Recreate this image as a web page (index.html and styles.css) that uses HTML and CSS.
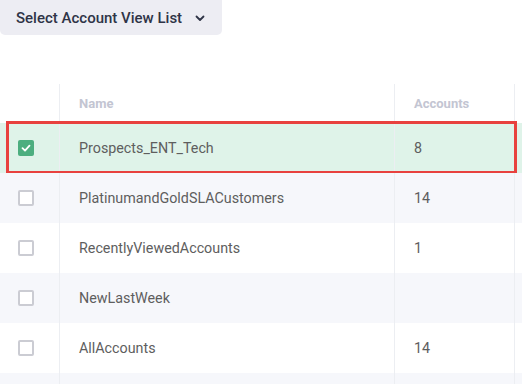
FILE: index.html
```html
<!DOCTYPE html>
<html lang="en">
<head>
  <meta charset="UTF-8">
  <title>Account Views</title>
  <link rel="stylesheet" href="styles.css">
</head>
<body>
  <div class="toolbar">
    <button class="view-select">
      <span>Select Account View List</span>
      <svg width="12" height="12" viewBox="0 0 12 12"><path d="M2.5 4.5 6 8l3.5-3.5" fill="none" stroke="#2f3447" stroke-width="1.8" stroke-linecap="round" stroke-linejoin="round"/></svg>
    </button>
  </div>

  <div class="views-table">
    <div class="row head">
      <div class="cell check"></div>
      <div class="cell name">Name</div>
      <div class="cell count">Accounts</div>
      <div class="cell pad"></div>
    </div>
    <div class="row selected">
      <div class="cell check"><span class="box checked"><svg width="12" height="12" viewBox="0 0 12 12"><path d="M2.5 6.2 5 8.6l4.5-5" fill="none" stroke="#fff" stroke-width="1.8" stroke-linecap="round" stroke-linejoin="round"/></svg></span></div>
      <div class="cell name">Prospects_ENT_Tech</div>
      <div class="cell count">8</div>
      <div class="cell pad"></div>
      <div class="highlight"></div>
    </div>
    <div class="row alt">
      <div class="cell check"><span class="box"></span></div>
      <div class="cell name">PlatinumandGoldSLACustomers</div>
      <div class="cell count">14</div>
      <div class="cell pad"></div>
    </div>
    <div class="row">
      <div class="cell check"><span class="box"></span></div>
      <div class="cell name">RecentlyViewedAccounts</div>
      <div class="cell count">1</div>
      <div class="cell pad"></div>
    </div>
    <div class="row alt">
      <div class="cell check"><span class="box"></span></div>
      <div class="cell name">NewLastWeek</div>
      <div class="cell count"></div>
      <div class="cell pad"></div>
    </div>
    <div class="row">
      <div class="cell check"><span class="box"></span></div>
      <div class="cell name">AllAccounts</div>
      <div class="cell count">14</div>
      <div class="cell pad"></div>
    </div>
    <div class="row alt last">
      <div class="cell check"></div>
      <div class="cell name"></div>
      <div class="cell count"></div>
      <div class="cell pad"></div>
    </div>
  </div>
</body>
</html>
```

FILE: styles.css
```css
* {
  margin: 0;
  padding: 0;
  box-sizing: border-box;
}

body {
  font-family: Roboto, 'Liberation Sans', sans-serif;
  background: #ffffff;
  color: #5e5e5e;
  width: 522px;
  height: 384px;
  overflow: hidden;
}

/* Top dropdown */
.toolbar {
  height: 84px;
}

.view-select {
  display: inline-flex;
  align-items: center;
  gap: 12px;
  height: 35px;
  padding: 0 16px;
  border: none;
  border-radius: 0 0 5px 5px;
  background: #ededf3;
  color: #2f3447;
  font-family: Roboto, sans-serif;
  font-size: 15px;
  font-weight: 500;
  white-space: nowrap;
  cursor: pointer;
}

/* Table */
.views-table {
  display: flex;
  flex-direction: column;
}

.row {
  position: relative;
  display: grid;
  grid-template-columns: 60px 335px 120px 7px;
  height: 50px;
  font-size: 14.3px;
}

.row.head {
  height: 39px;
  font-size: 13px;
  font-weight: 700;
  color: #c3c5d2;
}

.row.last {
  height: 11px;
}

.row.alt {
  background: #f6f7fb;
}

.row.selected {
  background: #dff3e9;
}

.cell {
  display: flex;
  align-items: center;
  border-right: 1px solid #eceef2;
}

.cell.pad {
  border-right: none;
}

.cell.check {
  padding-left: 18px;
}

.cell.name {
  padding-left: 19px;
}

.cell.count {
  padding-left: 19px;
}

.box {
  display: flex;
  align-items: center;
  justify-content: center;
  width: 16px;
  height: 16px;
  border: 2px solid #cbccd3;
  border-radius: 2px;
  background: #ffffff;
}

.box.checked {
  border: none;
  background: #4cae7f;
}

/* Red outline round the chosen row */
.highlight {
  position: absolute;
  top: -2px;
  bottom: -1px;
  left: 6px;
  right: 5px;
  border: 3px solid #e8413e;
  pointer-events: none;
}
```
